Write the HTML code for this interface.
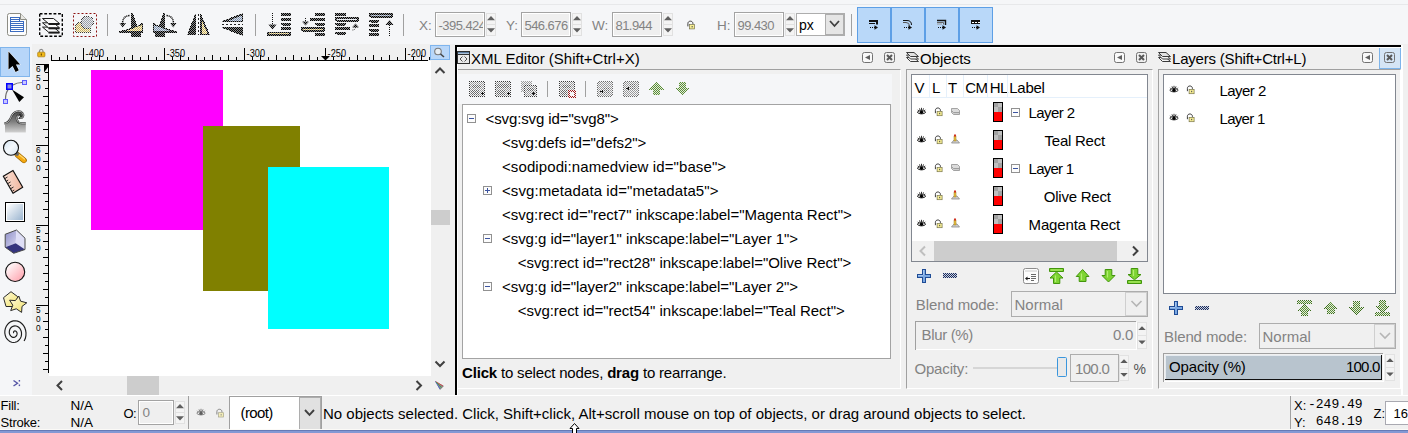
<!DOCTYPE html>
<html>
<head>
<meta charset="utf-8">
<title>Inkscape</title>
<style>
html,body{margin:0;padding:0;}
body{width:1408px;height:433px;position:relative;overflow:hidden;background:#f0f0f0;
 font-family:"Liberation Sans",sans-serif;font-size:15px;color:#000;}
.a{position:absolute;}
.t{position:absolute;white-space:pre;line-height:18px;height:18px;}
.g{color:#838383;}
.box{position:absolute;box-sizing:border-box;}
.inp{position:absolute;box-sizing:border-box;border:1px solid #adadad;background:#f0f0f0;}
.spin{position:absolute;box-sizing:border-box;width:10px;background:#f0f0f0;border:1px solid #e3e3e3;}
svg{position:absolute;overflow:visible;}
</style>
</head>
<body>
<svg width="0" height="0" style="left:0;top:0"><defs>
<pattern id="stk" width="2" height="2" patternUnits="userSpaceOnUse"><rect x="0" y="0" width="1" height="1" fill="#3a3a3a"/><rect x="1" y="1" width="1" height="1" fill="#3a3a3a"/></pattern>
<pattern id="std" width="2" height="2" patternUnits="userSpaceOnUse"><rect width="2" height="2" fill="#202020" fill-opacity="0.5"/><rect x="0" y="0" width="1" height="1" fill="#000"/><rect x="1" y="1" width="1" height="1" fill="#000"/></pattern>
<pattern id="stm" width="2" height="2" patternUnits="userSpaceOnUse"><rect x="0" y="0" width="1" height="1" fill="#6a6a6a"/><rect x="1" y="1" width="1" height="1" fill="#6a6a6a"/></pattern>
<pattern id="stl" width="2" height="2" patternUnits="userSpaceOnUse"><rect x="0" y="0" width="1" height="1" fill="#9a9a9a"/><rect x="1" y="1" width="1" height="1" fill="#9a9a9a"/></pattern>
<pattern id="stg" width="2" height="2" patternUnits="userSpaceOnUse"><rect width="2" height="2" fill="#e3eddb"/><rect x="0" y="0" width="1" height="1" fill="#5b8c38"/><rect x="1" y="1" width="1" height="1" fill="#5b8c38"/></pattern>
<pattern id="str" width="2" height="2" patternUnits="userSpaceOnUse"><rect x="0" y="0" width="1" height="1" fill="#a01818"/><rect x="1" y="1" width="1" height="1" fill="#a01818"/></pattern>
<pattern id="sty" width="2" height="2" patternUnits="userSpaceOnUse"><rect width="2" height="2" fill="#f6f0dc"/><rect x="0" y="0" width="1" height="1" fill="#c8ae58"/><rect x="1" y="1" width="1" height="1" fill="#c8ae58"/></pattern>
<symbol id="bl" overflow="visible"><rect x="0.5" y="0.5" width="10" height="10" rx="2" fill="#f9f9f9" stroke="#727272"/><path d="M3 5.500L8 3V8Z" fill="#606060"/></symbol>
<symbol id="bx" overflow="visible"><rect x="0.5" y="0.5" width="10" height="10" rx="2" fill="none" stroke="#727272"/><path d="M3 3L8 8M8 3L3 8" stroke="#585858" stroke-width="2" fill="none"/></symbol>
<symbol id="lay" overflow="visible"><g stroke="#3a3a3a" stroke-width="1" stroke-linejoin="round" fill="#f4f4f4"><path d="M0.500 6.500H8L12.500 10.500H4.500Z"/><path d="M0.500 4H8L12.500 8H4.500Z"/><path d="M0.500 1.500H8L12.500 5.500H4.500Z" fill="#e2e2e2"/></g></symbol>
<symbol id="eye" overflow="visible"><path d="M0.300 4.700C2 2.600 7 2.600 8.700 4.700C7 6.900 2 6.900 0.300 4.700Z" fill="#fff" stroke="#000" stroke-width="0.900"/><ellipse cx="4.500" cy="4.800" rx="1.700" ry="1.700" fill="#000"/><path d="M0.700 2.300L1.900 3.500M2.500 0.900L3.200 2.800M4.500 0.300V2.600M6.500 0.900L5.800 2.800M8.300 2.300L7.100 3.500" stroke="#000" stroke-width="0.800" fill="none"/></symbol>
<symbol id="lock" overflow="visible"><path d="M0.900 6.200V3.300C0.900 0.200 5.900 0.200 5.900 3.300V4.200" fill="none" stroke="#3c3c3c" stroke-width="1"/><rect x="2.600" y="4.400" width="5" height="4.300" fill="#f7ee94" stroke="#77744a" stroke-width="0.700"/><rect x="4.600" y="5.800" width="1.100" height="1.400" fill="#555"/></symbol>
<symbol id="tlay" overflow="visible"><g fill="#cfcfcf" stroke="#909090" stroke-width="0.800"><path d="M0.500 2.500H6.500L8.500 4.500V6.500H2.500L0.500 4.500Z"/><path d="M0.500 0.500H6.500L8.500 2.500V4.500H2.500L0.500 2.500Z" fill="#dcdcdc"/></g></symbol>
<symbol id="trect" overflow="visible"><path d="M0.500 8.500L3 5.500H6L8.500 8.500Z" fill="#d0d0d0" stroke="#8a8a8a" stroke-width="0.8"/><rect x="3" y="1.500" width="2" height="5" fill="#e8c040" stroke="#a08020" stroke-width="0.500"/><rect x="3" y="0" width="2" height="2" fill="#d03020"/></symbol>
<symbol id="sw" overflow="visible"><g shape-rendering="crispEdges"><rect x="0" y="0" width="10" height="20" fill="#000"/><rect x="1" y="1" width="8" height="9" fill="#bfbfbf"/><rect x="1" y="1" width="4" height="4" fill="#a2a2a2"/><rect x="5" y="5" width="4" height="5" fill="#a2a2a2"/><rect x="1" y="10" width="8" height="9" fill="#ff0000"/></g></symbol>
<symbol id="exm" overflow="visible"><g shape-rendering="crispEdges"><rect x="0.5" y="0.5" width="8" height="8" fill="#fcfcfc" stroke="#919191"/><path d="M2 4.500H7" stroke="#3c54a0" fill="none"/></g></symbol>
<symbol id="plus" overflow="visible"><g shape-rendering="crispEdges"><path d="M5 0H9V5H14V9H9V14H5V9H0V5H5Z" fill="#1f4c96"/><path d="M6 1H8V6H13V8H8V13H6V8H1V6H6Z" fill="#7ba8e2"/><path d="M6 1H7V6H6ZM1 6H6V7H1Z" fill="#a4c4ee"/></g></symbol>
<symbol id="aup" overflow="visible"><path d="M7 0.500L13.500 7H9.500V12.500H4.500V7H0.500Z"/></symbol>
<symbol id="adn" overflow="visible"><path d="M7 12.500L13.500 6H9.500V0.500H4.500V6H0.500Z"/></symbol>
<symbol id="atop" overflow="visible"><path d="M0.500 0.500H15.500V3.500H0.500Z"/><path d="M8 4.500L14.500 10H10.500V15.500H5.500V10H1.500Z"/></symbol>
<symbol id="abot" overflow="visible"><path d="M0.500 12.500H15.500V15.500H0.500Z"/><path d="M8 11.500L14.500 6H10.500V0.500H5.500V6H1.500Z"/></symbol>
<symbol id="spu" overflow="visible"><path d="M0.300 4L4 0.300L7.700 4Z"/></symbol>
<symbol id="spd" overflow="visible"><path d="M0.300 0L4 3.700L7.700 0Z"/></symbol>
<pattern id="stb" width="2" height="2" patternUnits="userSpaceOnUse"><rect width="2" height="2" fill="#d8e0ec"/><rect x="0" y="0" width="1" height="1" fill="#8090a8"/><rect x="1" y="1" width="1" height="1" fill="#8090a8"/></pattern>
<pattern id="stn" width="2" height="2" patternUnits="userSpaceOnUse"><rect width="2" height="2" fill="#c8d0e0"/><rect x="0" y="0" width="1" height="1" fill="#1c2c5c"/><rect x="1" y="1" width="1" height="1" fill="#1c2c5c"/></pattern>
<pattern id="sgy" width="2" height="2" patternUnits="userSpaceOnUse"><rect width="2" height="2" fill="#e6e8ec"/><rect x="0" y="0" width="1" height="1" fill="#9aa0a8"/><rect x="1" y="1" width="1" height="1" fill="#9aa0a8"/></pattern>
<symbol id="arrs" overflow="visible"><path d="M1049.500 268.500H1063.500V271.500H1049.500Z"/><path d="M1056.500 272L1063 278H1059.800V283.500H1053.500V278H1050Z"/><path d="M1082.600 269.500L1089 276.500H1086V281.500H1079.200V276.500H1076.200Z"/><path d="M1108.500 282L1115 275.500H1111.800V269.500H1105.200V275.500H1102Z"/><path d="M1134.500 279.800L1141 274.500H1137.800V268.500H1131.200V274.500H1128Z"/><path d="M1127.500 280.500H1141.500V283.500H1127.500Z"/></symbol>
<linearGradient id="ggr" x1="0" y1="0" x2="1" y2="0"><stop offset="0" stop-color="#6ecb22"/><stop offset="0.45" stop-color="#b6f070"/><stop offset="1" stop-color="#68c41c"/></linearGradient>
<pattern id="stg2" width="2" height="2" patternUnits="userSpaceOnUse"><rect x="0" y="0" width="1" height="1" fill="#3c6c1c"/><rect x="1" y="1" width="1" height="1" fill="#3c6c1c"/></pattern>
</defs></svg>
<!-- ===== top toolbar ===== -->
<div class="a" id="topbar" style="left:0;top:0;width:1408px;height:44px;background:#f5f6f8;"></div>
<div class="a" style="left:0;top:4px;width:1408px;height:1px;background:#e7e8ea;"></div>

<!-- TOPBAR -->
<svg id="tbicons" style="left:0;top:0" width="1000" height="46">
<path d="M107.500 14V36M255.500 14V36M403.500 14V36M851.500 14V36" stroke="#a0a0a0" fill="none" shape-rendering="crispEdges"/>
<path d="M9.500 13.500H20.500L26.500 19.500V33.500Q26.500 35.500 24.500 35.500H9.500Q7.500 35.500 7.500 33.500V15.500Q7.500 13.500 9.500 13.500Z" fill="#fdfdfd" stroke="#8c8c84" stroke-width="1"/><path d="M20.500 13.500V19.500H26.500" fill="#e8e8e4" stroke="#8c8c84" stroke-width="1"/>
<g shape-rendering="crispEdges"><rect x="10" y="17" width="10" height="4" fill="#3c6cc0"/><rect x="10" y="21" width="14" height="11" fill="#3c6cc0"/><path d="M11 18.500H19M11 20.500H19M11 22.500H23M11 24.500H23M11 26.500H23M11 28.500H23M11 30.500H23" stroke="#fff" fill="none"/></g>
<rect x="39.700" y="13.700" width="22.600" height="22.600" fill="none" stroke="#000" stroke-width="1.400" stroke-dasharray="2.800 1.800"/>
<g stroke="#1a1a1a" stroke-width="1" stroke-linejoin="round"><path d="M42.500 27.1H53.500L59.500 32.1H48.500Z" fill="#fafafa"/><path d="M48.500 32.8H59.500" stroke-width="1.600" fill="none"/><path d="M42.500 22.8H53.500L59.500 27.8H48.500Z" fill="#fafafa"/><path d="M48.500 28.5H59.500" stroke-width="1.600" fill="none"/><path d="M42.500 18.5H53.500L59.500 23.5H48.500Z" fill="#fafafa"/><path d="M48.500 24.2H59.500" stroke-width="1.600" fill="none"/></g>
<rect x="73.500" y="13.500" width="23" height="23" fill="none" stroke="#8c1010" stroke-width="1" stroke-dasharray="2 2"/>
<g shape-rendering="crispEdges"><path d="M75 25L78 22H90V33H75Z" fill="url(#sty)"/><path d="M75.500 25L78 22.500H90.500V32.500H75.500Z" fill="none" stroke="url(#stk)"/><circle cx="87.200" cy="22.400" r="6.200" fill="#f5f6f8"/><circle cx="87.200" cy="22.400" r="6.200" fill="url(#sgy)" stroke="url(#stk)"/></g>
<g shape-rendering="crispEdges"><path d="M131 13H133L137 26L143 22.500V32.500H119V31.500L131 28Z" fill="url(#std)"/><path d="M126 31L142 25V31Z" fill="#f5f6f8"/><path d="M126 31L142 25V31Z" fill="url(#sty)"/><path d="M131 33H141V37H131Z" fill="url(#std)"/></g><path d="M129.500 15.500Q122.500 16 122.500 24" fill="none" stroke="#111" stroke-width="1.500" stroke-dasharray="1.200 0.700"/><path d="M119.500 23H126L122.700 27.500Z" fill="url(#std)"/>
<g shape-rendering="crispEdges"><path d="M165 13H163L159 26L153 22.500V32.500H177V31.500L165 28Z" fill="url(#std)"/><path d="M170 31L154 25V31Z" fill="#f5f6f8"/><path d="M170 31L154 25V31Z" fill="url(#stb)"/><path d="M155 33H165V37H155Z" fill="url(#std)"/></g><path d="M166.500 15.500Q173.500 16 173.500 24" fill="none" stroke="#111" stroke-width="1.500" stroke-dasharray="1.200 0.700"/><path d="M170 23H176.500L173.300 27.500Z" fill="url(#std)"/>
<g shape-rendering="crispEdges"><path d="M187 35H196V14H195Z" fill="url(#std)"/><path d="M200 14V35H210L201 14Z" fill="url(#std)"/><path d="M201.500 19.500V33.500H207.500Z" fill="#f5f6f8"/><path d="M201.500 19.500V33.500H207.500Z" fill="url(#sty)"/><path d="M198.500 14V35" stroke="#222" stroke-dasharray="2 2"/></g>
<g shape-rendering="crispEdges"><path d="M222 22V21L243 13V22Z" fill="url(#std)"/><path d="M229 20.500L242 15.500V20.500Z" fill="#f5f6f8"/><path d="M229 20.500L242 15.500V20.500Z" fill="url(#stb)"/><path d="M222 27H243V36L222 28Z" fill="url(#std)"/><path d="M222 24.500H243" stroke="#222" stroke-dasharray="2 2"/></g>
<g shape-rendering="crispEdges" fill="url(#std)"><rect x="281" y="13" width="10" height="3" rx="1.5"/><rect x="281" y="18" width="10" height="3" rx="1.5"/><rect x="281" y="22.5" width="10" height="3" rx="1.5"/><rect x="281" y="27" width="10" height="3" rx="1.5"/><rect x="267" y="31.5" width="24" height="4.5" rx="1.5"/><rect x="315" y="13" width="10" height="3" rx="1.5"/><rect x="310" y="18" width="15" height="3" rx="1.5"/><rect x="315" y="22.5" width="10" height="3" rx="1.5"/><rect x="301" y="27" width="24" height="4.5" rx="1.5"/><rect x="315" y="33" width="10" height="3" rx="1.5"/><rect x="335" y="13" width="11" height="3" rx="1.5"/><rect x="335" y="17" width="24" height="4.5" rx="1.5"/><rect x="335" y="22.5" width="11" height="3" rx="1.5"/><rect x="335" y="27" width="15" height="3" rx="1.5"/><rect x="335" y="31.5" width="11" height="3" rx="1.5"/><rect x="369" y="13" width="24" height="4.5" rx="1.5"/><rect x="369" y="19.5" width="10" height="3" rx="1.5"/><rect x="369" y="24" width="10" height="3" rx="1.5"/><rect x="369" y="28.5" width="10" height="3" rx="1.5"/><rect x="369" y="33" width="10" height="3" rx="1.5"/></g>
<g shape-rendering="crispEdges"><rect x="269" y="33" width="20" height="1" fill="url(#sty)"/><rect x="303" y="29" width="20" height="1" fill="url(#sty)"/><rect x="337" y="19" width="20" height="1" fill="#eef2f8"/><rect x="371" y="15" width="20" height="1" fill="url(#stb)"/></g>
<g><path d="M272.500 13V25" stroke="#111" stroke-width="1" stroke-dasharray="1 1" shape-rendering="crispEdges"/><path d="M268.500 24.500H276.500L272.500 29.500Z" fill="url(#std)"/><path d="M305.500 18V22" stroke="#111" stroke-dasharray="1 1" shape-rendering="crispEdges"/><path d="M302 21.500H309L305.500 25.500Z" fill="url(#std)"/><path d="M355.500 27Q355.500 30 352.500 30" fill="none" stroke="#222" stroke-dasharray="1 1"/><path d="M352 27.500H359L355.500 23.500Z" fill="url(#std)"/><path d="M389.500 25V36" stroke="#111" stroke-dasharray="1 1" shape-rendering="crispEdges"/><path d="M385.500 25H393.500L389.500 20Z" fill="url(#std)"/></g>
<use href="#lock" x="687" y="20.200"/>
<g shape-rendering="crispEdges" fill="#b9d8f9" stroke="#5d9fe6"><rect x="857.500" y="7.500" width="33" height="35"/><rect x="891.500" y="7.500" width="33" height="35"/><rect x="925.500" y="7.500" width="33" height="35"/><rect x="959.500" y="7.500" width="33" height="35"/></g>
<g fill="none" stroke="#111"><path d="M869 21H877V24.500" stroke-width="2"/><path d="M869 23.500H875" stroke-width="1" shape-rendering="crispEdges"/><path d="M903 20.500H907Q911.500 20.500 911.500 25" stroke-width="1"/><path d="M903 22.500H906Q909.500 22.500 909.500 26" stroke-width="1" stroke="#555"/><path d="M937 20.500H945.500V25" stroke-width="1.400"/><path d="M937 22.500H943.500V24.500" stroke-width="1" stroke="#666"/><path d="M937 24H942" stroke="#999" stroke-width="1"/></g><g shape-rendering="crispEdges"><rect x="971" y="20" width="9" height="4" fill="#111"/><path d="M972 22.500H973.500M975 22.500H976.500M978 22.500H979.500" stroke="#fff"/></g><path d="M870 27.500H875" stroke="#111" stroke-dasharray="1 1" shape-rendering="crispEdges"/><path d="M874.5 25.300L878 27.500L874.5 29.700Z" fill="#111"/><path d="M904 27.500H909" stroke="#111" stroke-dasharray="1 1" shape-rendering="crispEdges"/><path d="M908.5 25.300L912 27.500L908.5 29.700Z" fill="#111"/><path d="M938 27.500H943" stroke="#111" stroke-dasharray="1 1" shape-rendering="crispEdges"/><path d="M942.5 25.300L946 27.500L942.5 29.700Z" fill="#111"/><path d="M972 27.500H977" stroke="#111" stroke-dasharray="1 1" shape-rendering="crispEdges"/><path d="M976.5 25.300L980 27.500L976.5 29.700Z" fill="#111"/>
</svg>
<div class="t g" style="left:419px;top:17px;font-size:13.5px;">X:</div>
<div class="box" style="left:435px;top:12px;width:50px;height:25px;border:1px solid #a3a3a3;background:#fff;"></div><div class="a" style="left:437px;top:14px;width:46px;height:21px;background:#efefef;overflow:hidden;"><span class="t g" style="left:1.500px;top:3px;font-size:13px;letter-spacing:-0.55px;">-395.424</span></div>
<svg style="left:486px;top:13px" width="10" height="23"><g shape-rendering="crispEdges"><rect x="0.500" y="0.500" width="9" height="22" fill="#f4f4f4" stroke="#e1e1e1"/><path d="M1 11.500H9" stroke="#e1e1e1"/></g><path d="M1 7.200L5 3L9 7.200Z M1 15.300L5 19.500L9 15.300Z" fill="#606060"/></svg>
<div class="t g" style="left:506px;top:17px;font-size:13.5px;">Y:</div>
<div class="box" style="left:521px;top:12px;width:50px;height:25px;border:1px solid #a3a3a3;background:#fff;"></div><div class="a" style="left:523px;top:14px;width:46px;height:21px;background:#efefef;overflow:hidden;"><span class="t g" style="left:1.500px;top:3px;font-size:13px;letter-spacing:-0.55px;">546.676</span></div>
<svg style="left:572px;top:13px" width="10" height="23"><g shape-rendering="crispEdges"><rect x="0.500" y="0.500" width="9" height="22" fill="#f4f4f4" stroke="#e1e1e1"/><path d="M1 11.500H9" stroke="#e1e1e1"/></g><path d="M1 7.200L5 3L9 7.200Z M1 15.300L5 19.500L9 15.300Z" fill="#606060"/></svg>
<div class="t g" style="left:592px;top:17px;font-size:13.5px;">W:</div>
<div class="box" style="left:612px;top:12px;width:50px;height:25px;border:1px solid #a3a3a3;background:#fff;"></div><div class="a" style="left:614px;top:14px;width:46px;height:21px;background:#efefef;overflow:hidden;"><span class="t g" style="left:1.500px;top:3px;font-size:13px;letter-spacing:-0.55px;">81.944</span></div>
<svg style="left:663px;top:13px" width="10" height="23"><g shape-rendering="crispEdges"><rect x="0.500" y="0.500" width="9" height="22" fill="#f4f4f4" stroke="#e1e1e1"/><path d="M1 11.500H9" stroke="#e1e1e1"/></g><path d="M1 7.200L5 3L9 7.200Z M1 15.300L5 19.500L9 15.300Z" fill="#606060"/></svg>
<div class="t g" style="left:717px;top:17px;font-size:13.5px;">H:</div>
<div class="box" style="left:734px;top:12px;width:50px;height:25px;border:1px solid #a3a3a3;background:#fff;"></div><div class="a" style="left:736px;top:14px;width:46px;height:21px;background:#efefef;overflow:hidden;"><span class="t g" style="left:1.500px;top:3px;font-size:13px;letter-spacing:-0.55px;">99.430</span></div>
<svg style="left:785px;top:13px" width="10" height="23"><g shape-rendering="crispEdges"><rect x="0.500" y="0.500" width="9" height="22" fill="#f4f4f4" stroke="#e1e1e1"/><path d="M1 11.500H9" stroke="#e1e1e1"/></g><path d="M1 7.200L5 3L9 7.200Z M1 15.300L5 19.500L9 15.300Z" fill="#606060"/></svg>
<div class="box" style="left:796px;top:13px;width:49px;height:23px;background:#fff;border:1px solid #adadad;"></div><div class="box" style="left:825px;top:14px;width:19px;height:21px;background:#e5e5e5;border:1px solid #adadad;"></div><div class="t" style="left:799px;top:16px;font-size:14px;">px</div>
<svg style="left:0;top:0" width="1000" height="46"><path d="M830 21L834.500 26L839 21" fill="none" stroke="#404040" stroke-width="1.800"/></svg>
<!-- ===== toolbox ===== -->
<div class="a" id="toolbox" style="left:0;top:44px;width:32px;height:351px;background:#f5f6f8;"></div>
<div class="box" style="left:0;top:47px;width:30px;height:30px;background:#b7d6f9;border:1px solid #80b5ec;"></div>

<!-- ===== canvas area ===== -->
<div class="a" id="canvasarea" style="left:32px;top:44px;width:423px;height:351px;background:#f0f0f0;"></div>
<div class="a" id="canvas" style="left:49px;top:61px;width:382px;height:315px;background:#fff;"></div>
<div class="a" style="left:91px;top:70px;width:132px;height:160px;background:#ff00ff;"></div>
<div class="a" style="left:203px;top:126px;width:97px;height:165px;background:#808000;"></div>
<div class="a" style="left:268px;top:167px;width:121px;height:162px;background:#00ffff;"></div>

<!-- RULERS -->
<svg id="rulers" class="a" style="left:0;top:0" width="460" height="400" shape-rendering="crispEdges">
<path d="M51 60.5H428" stroke="#000" stroke-width="1" fill="none"/>
<path d="M51.5 55V60M59.5 57V60M67.5 55V60M75.5 57V60M83.5 48V60M91.5 57V60M99.5 55V60M107.5 57V60M115.5 55V60M124.5 57V60M132.5 55V60M140.5 57V60M148.5 55V60M156.5 57V60M164.5 48V60M172.5 57V60M180.5 55V60M188.5 57V60M196.5 55V60M204.5 57V60M212.5 55V60M220.5 57V60M228.5 55V60M236.5 57V60M244.5 48V60M252.5 57V60M260.5 55V60M268.5 57V60M276.5 55V60M285.5 57V60M293.5 55V60M301.5 57V60M309.5 55V60M317.5 57V60M325.5 48V60M333.5 57V60M341.5 55V60M349.5 57V60M357.5 55V60M365.5 57V60M373.5 55V60M381.5 57V60M389.5 55V60M397.5 57V60M405.5 48V60M413.5 57V60M421.5 55V60M429.5 57V60" stroke="#000" stroke-width="1" fill="none"/>
<path d="M48.5 64V373" stroke="#000" stroke-width="1" fill="none"/>
<path d="M36 64.5H48M45 72.5H48M43 80.5H48M45 88.5H48M43 96.5H48M45 105.5H48M43 113.5H48M45 121.5H48M43 129.5H48M45 137.5H48M36 145.5H48M45 153.5H48M43 161.5H48M45 169.5H48M43 177.5H48M45 185.5H48M43 193.5H48M45 201.5H48M43 209.5H48M45 217.5H48M36 225.5H48M45 233.5H48M43 241.5H48M45 249.5H48M43 257.5H48M45 265.5H48M43 273.5H48M45 281.5H48M43 289.5H48M45 297.5H48M36 305.5H48M45 313.5H48M43 321.5H48M45 329.5H48M43 337.5H48M45 345.5H48M43 353.5H48M45 361.5H48M43 369.5H48" stroke="#000" stroke-width="1" fill="none"/>
<path d="M321 56H330L325.5 60.5Z" fill="#000" shape-rendering="auto"/>
<path d="M44 64.500H48.500V66.500L44 72.500Z" fill="#000" shape-rendering="auto"/>
<g font-family="Liberation Sans, sans-serif" font-size="10.3" fill="#000" shape-rendering="auto">
<text x="85.6" y="57" textLength="18.4" lengthAdjust="spacingAndGlyphs">-400</text><text x="166.6" y="57" textLength="18.4" lengthAdjust="spacingAndGlyphs">-350</text><text x="246.6" y="57" textLength="18.4" lengthAdjust="spacingAndGlyphs">-300</text><text x="327.6" y="57" textLength="18.4" lengthAdjust="spacingAndGlyphs">-250</text><text x="407.6" y="57" textLength="18.4" lengthAdjust="spacingAndGlyphs">-200</text>
<text x="35.9" y="71.5" font-size="9.8" textLength="4.6" lengthAdjust="spacingAndGlyphs">6</text><text x="35.9" y="80.5" font-size="9.8" textLength="4.6" lengthAdjust="spacingAndGlyphs">5</text><text x="35.9" y="89.5" font-size="9.8" textLength="4.6" lengthAdjust="spacingAndGlyphs">0</text><text x="35.9" y="152.5" font-size="9.8" textLength="4.6" lengthAdjust="spacingAndGlyphs">6</text><text x="35.9" y="161.5" font-size="9.8" textLength="4.6" lengthAdjust="spacingAndGlyphs">0</text><text x="35.9" y="170.5" font-size="9.8" textLength="4.6" lengthAdjust="spacingAndGlyphs">0</text><text x="35.9" y="232.5" font-size="9.8" textLength="4.6" lengthAdjust="spacingAndGlyphs">5</text><text x="35.9" y="241.5" font-size="9.8" textLength="4.6" lengthAdjust="spacingAndGlyphs">5</text><text x="35.9" y="250.5" font-size="9.8" textLength="4.6" lengthAdjust="spacingAndGlyphs">0</text><text x="35.9" y="312.5" font-size="9.8" textLength="4.6" lengthAdjust="spacingAndGlyphs">5</text><text x="35.9" y="321.5" font-size="9.8" textLength="4.6" lengthAdjust="spacingAndGlyphs">0</text><text x="35.9" y="330.5" font-size="9.8" textLength="4.6" lengthAdjust="spacingAndGlyphs">0</text>
</g>
</svg>
<!-- TOOLICONS -->
<svg id="toolicons" style="left:0;top:0" width="50" height="400">
<defs>
<linearGradient id="gw" x1="0" y1="0" x2="0" y2="1"><stop offset="0" stop-color="#4a4a4a"/><stop offset="0.5" stop-color="#808080"/><stop offset="1" stop-color="#d2d2d2"/></linearGradient>
<linearGradient id="gr" x1="0" y1="0" x2="1" y2="1"><stop offset="0" stop-color="#ffffff"/><stop offset="1" stop-color="#9bb5d0"/></linearGradient>
<linearGradient id="ge" x1="0" y1="0" x2="1" y2="1"><stop offset="0.1" stop-color="#ffffff"/><stop offset="1" stop-color="#ff9aa6"/></linearGradient>
<linearGradient id="gm" x1="0" y1="0" x2="1" y2="0"><stop offset="0" stop-color="#fbe3d8"/><stop offset="1" stop-color="#f0b49c"/></linearGradient>
<linearGradient id="gs" x1="0" y1="0" x2="1" y2="1"><stop offset="0" stop-color="#fffbe0"/><stop offset="1" stop-color="#f2e26a"/></linearGradient>
<linearGradient id="gz" x1="0" y1="0" x2="1" y2="1"><stop offset="0" stop-color="#cfe0ee"/><stop offset="0.5" stop-color="#f4f8fc"/><stop offset="1" stop-color="#d4e2ee"/></linearGradient>
<linearGradient id="gbl" x1="0" y1="0" x2="1" y2="1"><stop offset="0" stop-color="#8e8ec6"/><stop offset="1" stop-color="#d6d6f2"/></linearGradient>
</defs>
<path d="M8.500 51.500V69.500L12.600 66L15.600 72L18.800 70.300L15.900 64.600H20.200Z" fill="#000" stroke="#fff" stroke-width="1" stroke-linejoin="round" paint-order="stroke"/>
<path d="M5.500 99Q5.500 93 8 90M13 85Q17 82.500 22 82.500" fill="none" stroke="#707070" stroke-width="1.200"/>
<rect x="6.750" y="83.750" width="5.500" height="5.500" fill="#8a8ae0" stroke="#0000ff" stroke-width="1.500"/><rect x="22.500" y="80.500" width="4" height="4" fill="#c8c8ff" stroke="#5a5aff"/><rect x="3.500" y="99.500" width="4" height="4" fill="#c8c8ff" stroke="#5a5aff"/>
<path d="M12 89.500L24 97.300L19.300 102Z" fill="#000"/>
<path d="M4.300 123.500C9 123.500 10 119 12 115.300C14.500 110.800 20 110 22.500 113C24.300 115.300 23 118.500 20 118C22 116 20.500 114 18.500 115C15 117 17 123.500 21.500 123.500H25.800V132.500H5V125Q4.500 124.500 4.300 123.500Z" fill="url(#gw)"/><path d="M4.300 123.300C9 123.300 10 119 12 115.300C14.500 110.800 20 110 22.500 113C24.300 115.300 23 118.500 20 118C22 116 20.500 114 18.500 115C15 117 17 123.300 21.500 123.300H25.800" fill="none" stroke="#2e2e2e" stroke-width="1.900"/><path d="M4.300 123.300C9 123.300 10 119 12 115.300C14.500 110.800 20 110 22.500 113C24.300 115.300 23 118.500 20 118M18.500 115C15 117 17 123.300 21.500 123.300H25.800" fill="none" stroke="#f4f4f4" stroke-width="0.700"/>
<path d="M17.500 154.800L24 160.300" stroke="#9a6400" stroke-width="5.600" stroke-linecap="round"/><path d="M17.500 154.800L24 160.300" stroke="#f4a810" stroke-width="4.200" stroke-linecap="round"/><path d="M18.600 154.200L24.400 159" stroke="#ffd870" stroke-width="1.200" stroke-linecap="round"/><path d="M15.800 152.800L18.300 155.300" stroke="#6a6a6a" stroke-width="3.400"/><circle cx="11" cy="147.800" r="7.500" fill="url(#gz)" stroke="#111" stroke-width="1.100"/>
<path d="M3.300 176.200L13 170.500L22.700 187.300L13 193.300Z" fill="url(#gm)" stroke="#111" stroke-width="1.200" stroke-linejoin="round"/><path d="M5 178.500L7.500 177M6.500 181L8.200 180M8 183.500L10.500 182M9.500 186L11.200 185M11 188.500L13.500 187M12.500 191L14.200 190" stroke="#111" stroke-width="0.900"/>
<g shape-rendering="crispEdges"><rect x="5.500" y="202.500" width="19" height="19" fill="#fff" stroke="#000"/></g><rect x="7" y="204" width="16" height="16" fill="url(#gr)"/>
<path d="M16.500 230L5.200 234.300V247.200L15.700 243.200Z" fill="url(#gbl)"/><path d="M16.500 230L25 238.200V249.500L15.700 243.200Z" fill="#dedef6"/><path d="M5.200 247.200L15.700 243.200L25 249.500L13.700 253.300Z" fill="#34347e"/><path d="M16.500 230L5.200 234.300V247.200L13.700 253.300L25 249.500V238.200Z" fill="none" stroke="#4a4a4a" stroke-width="1" stroke-linejoin="round"/>
<circle cx="15.100" cy="271.900" r="9.600" fill="url(#ge)" stroke="#111" stroke-width="1.100"/>
<path d="M11 291.700L17.600 296.600L16.500 306.500H6L3.500 297.700Z" fill="url(#gs)" stroke="#2a2a2a" stroke-width="1" stroke-linejoin="round"/><path d="M18.800 296L20.600 301.200L26.800 302.800L22 306.400L21.600 312.400L16.300 308.800L10.700 310.600L12.800 305.200L9.600 300.200L15.400 300.600Z" fill="url(#gs)" stroke="#2a2a2a" stroke-width="1" stroke-linejoin="round"/>
<path d="M13.9 332.9L13.7 332.8L13.6 332.6L13.6 332.3L13.6 332.0L13.7 331.7L13.9 331.4L14.1 331.2L14.5 331.0L14.9 330.9L15.3 331.0L15.7 331.1L16.1 331.4L16.5 331.8L16.8 332.3L17.0 332.9L17.1 333.6L17.0 334.3L16.8 335.0L16.5 335.7L16.0 336.3L15.4 336.8L14.7 337.2L13.9 337.3L13.0 337.3L12.2 337.1L11.4 336.6L10.7 335.9L10.1 335.1L9.6 334.0L9.3 332.9L9.3 331.7L9.5 330.5L9.9 329.3L10.6 328.2L11.4 327.3L12.5 326.5L13.7 326.1L14.9 325.9L16.2 326.0L17.5 326.5L18.7 327.3L19.8 328.4L20.6 329.7L21.2 331.2L21.5 332.9L21.5 334.6L21.2 336.4L20.5 338.0L19.5 339.5L18.3 340.8L16.8 341.7L15.2 342.3L13.4 342.5L11.7 342.2L9.9 341.5L8.4 340.4L7.0 339.0L5.9 337.2L5.2 335.1L4.8 332.9L4.9 330.6L5.4 328.4L6.3 326.2L7.6 324.4L9.2 322.8L11.1 321.6L13.2 320.9L15.4 320.8L17.6 321.1L19.8 322.0L21.7 323.5L23.4 325.3L24.7 327.6L25.6 330.2L26.0 332.9L25.9 335.7L25.3 338.5L24.1 341.1" fill="none" stroke="#1c1c1c" stroke-width="1.150"/>
<path d="M13.500 380.500L17.500 383.200L13.500 386" fill="none" stroke="#5656a6" stroke-width="1.400"/><rect x="18.700" y="380" width="1.400" height="1.600" fill="#5656a6"/><rect x="18.700" y="384.500" width="1.400" height="1.600" fill="#5656a6"/>
<path d="M39.500 52.500V51.300C39.500 48.700 43 48.700 43 51.300V52.500" fill="none" stroke="#8a8a8a" stroke-width="1.200"/><rect x="37.700" y="52.200" width="7.200" height="4.600" rx="0.800" fill="#f0b818" stroke="#a87808" stroke-width="0.700"/><rect x="40.800" y="53.500" width="1" height="2" fill="#5a3c00"/>
</svg>
<!-- SCROLLBARS -->
<div class="box" style="left:430px;top:45px;width:20px;height:15px;background:#b9d7f9;border:1px solid #7fb5ee;"></div>
<div class="a" style="left:431px;top:210px;width:19px;height:15px;background:#cdcdcd;"></div>
<div class="a" style="left:127px;top:376px;width:32px;height:19px;background:#cdcdcd;"></div>
<svg class="a" style="left:0;top:0" width="460" height="400" fill="none" stroke="#404040" stroke-width="2">
<path d="M435.5 73L440 68.5L444.500 73"/>
<circle cx="438" cy="51.500" r="3.300" fill="#e8eef4" stroke="#7a7a7a" stroke-width="1.100"/><path d="M440.500 54L444 57" stroke="#444" stroke-width="1.600"/>
<path d="M435.5 361.5L440 366L444.500 361.5"/>
<path d="M416.5 381L421 385.500L416.500 390"/>
<path d="M62 381L57.500 385.500L62 390"/>
</svg>
<!-- DOCK -->
<div class="a" style="left:455px;top:45px;width:946px;height:2px;background:#000;"></div>
<div class="a" style="left:455px;top:45px;width:2px;height:350px;background:#000;"></div>
<div class="a" style="left:1401px;top:45px;width:2px;height:350px;background:#fff;"></div>
<!-- panel frames (etched) -->
<div class="box" style="left:457px;top:69px;width:444px;height:320px;border-top:1px solid #a0a0a0;border-right:1px solid #fff;border-bottom:1px solid #fff;"></div>
<div class="box" style="left:906px;top:69px;width:247px;height:320px;border-top:1px solid #a0a0a0;border-left:1px solid #a0a0a0;border-right:1px solid #fff;border-bottom:1px solid #fff;"></div>
<div class="box" style="left:1158px;top:69px;width:243px;height:320px;border-top:1px solid #a0a0a0;border-left:1px solid #a0a0a0;border-right:1px solid #fff;border-bottom:1px solid #fff;"></div>
<!-- panel titles -->
<div class="t" style="left:471px;top:50px;">XML Editor (Shift+Ctrl+X)</div>
<div class="t" style="left:920px;top:50px;">Objects</div>
<div class="t" style="left:1172px;top:50px;letter-spacing:-0.2px;">Layers (Shift+Ctrl+L)</div>
<div class="box" style="left:1379px;top:47px;width:22px;height:22px;background:#d5e5f5;border:1px solid #7db4ea;"></div>
<!-- PANELBTNS -->
<div class="a" style="left:457px;top:47px;width:944px;height:1px;background:#fff;"></div>
<div class="a" style="left:457px;top:47px;width:1px;height:348px;background:#fff;"></div>
<svg style="left:0;top:0" width="1408" height="72">
<use href="#bl" x="862" y="52"/><use href="#bx" x="884" y="52"/>
<use href="#bl" x="1114" y="52"/><use href="#bx" x="1136" y="52"/>
<use href="#bl" x="1362" y="52"/><use href="#bx" x="1384" y="52"/>
<use href="#lay" x="906" y="51"/><use href="#lay" x="1158" y="51"/>
<g shape-rendering="crispEdges"><rect x="457.5" y="51.5" width="12" height="12" fill="#e9e9e9" stroke="#303030"/><rect x="458" y="52" width="11" height="1" fill="#5f7fa3"/><rect x="458" y="53" width="11" height="1" fill="#a9bfd6"/><rect x="458" y="54" width="11" height="1" fill="#303030"/></g>
<path d="M462.500 56.500L460 59L462.500 61.500M464.500 56.500L467 59L464.500 61.500" stroke="#505050" stroke-width="1" fill="none"/>
</svg>
<!-- XMLPANEL -->
<div class="a" style="left:458px;top:74px;width:434px;height:30px;background:#f5f6f8;"></div>
<div class="box" style="left:462px;top:104px;width:429px;height:255px;background:#fff;border:1px solid #a3a3a3;"></div>
<div class="t" style="left:485.5px;top:110px;letter-spacing:-0.111px;">&lt;svg:svg id="svg8"&gt;</div>
<svg style="left:467px;top:114px" width="9" height="9" shape-rendering="crispEdges"><rect x="0.5" y="0.5" width="8" height="8" fill="#fcfcfc" stroke="#919191"/><path d="M2 4.5H7" stroke="#3c54a0" fill="none"/></svg>
<div class="t" style="left:502px;top:134px;letter-spacing:-0.049px;">&lt;svg:defs id="defs2"&gt;</div>
<div class="t" style="left:502px;top:158px;letter-spacing:0.099px;">&lt;sodipodi:namedview id="base"&gt;</div>
<div class="t" style="left:502px;top:182px;letter-spacing:0.099px;">&lt;svg:metadata id="metadata5"&gt;</div>
<svg style="left:483px;top:186px" width="9" height="9" shape-rendering="crispEdges"><rect x="0.5" y="0.5" width="8" height="8" fill="#fcfcfc" stroke="#919191"/><path d="M2 4.5H7M4.5 2V7" stroke="#3c54a0" fill="none"/></svg>
<div class="t" style="left:502px;top:206px;letter-spacing:-0.019px;">&lt;svg:rect id="rect7" inkscape:label="Magenta Rect"&gt;</div>
<div class="t" style="left:502px;top:230px;letter-spacing:-0.049px;">&lt;svg:g id="layer1" inkscape:label="Layer 1"&gt;</div>
<svg style="left:483px;top:234px" width="9" height="9" shape-rendering="crispEdges"><rect x="0.5" y="0.5" width="8" height="8" fill="#fcfcfc" stroke="#919191"/><path d="M2 4.5H7" stroke="#3c54a0" fill="none"/></svg>
<div class="t" style="left:517.7px;top:254px;letter-spacing:-0.026px;">&lt;svg:rect id="rect28" inkscape:label="Olive Rect"&gt;</div>
<div class="t" style="left:502px;top:278px;letter-spacing:-0.049px;">&lt;svg:g id="layer2" inkscape:label="Layer 2"&gt;</div>
<svg style="left:483px;top:282px" width="9" height="9" shape-rendering="crispEdges"><rect x="0.5" y="0.5" width="8" height="8" fill="#fcfcfc" stroke="#919191"/><path d="M2 4.5H7" stroke="#3c54a0" fill="none"/></svg>
<div class="t" style="left:517.7px;top:302px;letter-spacing:-0.023px;">&lt;svg:rect id="rect54" inkscape:label="Teal Rect"&gt;</div>
<svg id="xmltb" style="left:0;top:0" width="700" height="110" shape-rendering="crispEdges">
<g fill="url(#stl)" stroke="url(#stk)">
<rect x="469.500" y="81.500" width="15" height="15"/>
<rect x="495.500" y="81.500" width="15" height="15"/>
<rect x="559.500" y="81.500" width="15" height="15"/>
</g>
<rect x="521.500" y="81.500" width="10" height="10" fill="url(#stl)" stroke="url(#stl)"/>
<rect x="524.500" y="85.500" width="12" height="11" fill="#f5f6f8" stroke="none"/>
<rect x="524.500" y="85.500" width="12" height="11" fill="url(#stl)" stroke="url(#stk)"/>
<g fill="url(#stm)"><rect x="472" y="85" width="9" height="3"/><rect x="471" y="90" width="8" height="5"/><rect x="497" y="84" width="12" height="4"/><rect x="497" y="90" width="8" height="5"/><rect x="527" y="88" width="7" height="3"/><rect x="562" y="85" width="9" height="3"/><rect x="561" y="90" width="6" height="5"/></g>
<rect x="568" y="90" width="7" height="7" fill="#f5f6f8"/><rect x="568.500" y="90.500" width="6" height="6" fill="none" stroke="url(#str)" stroke-width="2"/>
<g fill="url(#stl)" stroke="url(#stm)">
<rect x="597.500" y="81.500" width="15" height="15" rx="2.5"/>
<rect x="623.500" y="81.500" width="15" height="15" rx="2.500"/>
</g>
<g fill="url(#stm)"><rect x="604" y="88" width="6" height="1"/><rect x="604" y="90" width="6" height="1"/><rect x="604" y="92" width="6" height="1"/><rect x="630" y="84" width="6" height="1"/><rect x="630" y="86" width="6" height="1"/><rect x="630" y="88" width="6" height="1"/></g>
<g fill="#111"><path d="M482 92h1v1h1v1h-1v1h-1v-1h-1v-1h1z"/><path d="M508 92h1v1h1v1h-1v1h-1v-1h-1v-1h1z"/><path d="M533 92h1v1h1v1h-1v1h-1v-1h-1v-1h1z"/><path d="M600 91h2v-1h1v3h-1v-1h-2z"/><path d="M626 88h2v-1h1v3h-1v-1h-2z"/></g>
<path d="M547.5 81V97M585.500 81V97" stroke="#a0a0a0" fill="none"/>
<path d="M656.5 82L664 89.500H660V95H653V89.500H649Z" fill="url(#stg)"/>
<path d="M682.5 95L690 87.500H686V82H679V87.500H675Z" fill="url(#stg)"/>
</svg>
<div class="t" style="left:462px;top:364px;letter-spacing:-0.18px;"><b>Click</b> to select nodes, <b>drag</b> to rearrange.</div>
<!-- OBJPANEL -->
<div class="box" style="left:911px;top:74px;width:237px;height:188px;background:#fff;border:1px solid #828790;"></div>
<div class="t" style="left:914.4px;top:79px;letter-spacing:0px;">V</div>
<div class="t" style="left:932px;top:79px;letter-spacing:0px;">L</div>
<div class="t" style="left:948px;top:79px;letter-spacing:0px;">T</div>
<div class="t" style="left:965.3px;top:79px;letter-spacing:-0.6px;">CM</div>
<div class="t" style="left:989.8px;top:79px;letter-spacing:-0.7px;">HL</div>
<div class="t" style="left:1009.3px;top:79px;letter-spacing:-0.3px;">Label</div>
<div class="a" style="left:912px;top:97px;width:235px;height:1px;background:#e5f0fb;"></div>
<div class="a" style="left:929px;top:75px;width:1px;height:22px;background:#e5f0fb;"></div>
<div class="a" style="left:946px;top:75px;width:1px;height:22px;background:#e5f0fb;"></div>
<div class="a" style="left:963px;top:75px;width:1px;height:22px;background:#e5f0fb;"></div>
<div class="a" style="left:987px;top:75px;width:1px;height:22px;background:#e5f0fb;"></div>
<div class="a" style="left:1007px;top:75px;width:1px;height:22px;background:#e5f0fb;"></div>
<div class="t" style="left:1028.6px;top:104px;letter-spacing:-0.607px;">Layer 2</div>
<div class="t" style="left:1044.6px;top:132px;letter-spacing:-0.248px;">Teal Rect</div>
<div class="t" style="left:1028.6px;top:160px;letter-spacing:-0.764px;">Layer 1</div>
<div class="t" style="left:1043.8px;top:188px;letter-spacing:-0.229px;">Olive Rect</div>
<div class="t" style="left:1028.6px;top:216px;letter-spacing:-0.166px;">Magenta Rect</div>
<svg style="left:0;top:0" width="1408" height="433">
<use href="#eye" x="917" y="107.5"/><use href="#lock" x="934.500" y="107"/><use href="#tlay" x="951" y="108"/><use href="#sw" x="993" y="102"/><use href="#exm" x="1011" y="108"/>
<use href="#eye" x="917" y="135.5"/><use href="#lock" x="934.500" y="135"/><use href="#trect" x="951" y="134.5"/><use href="#sw" x="993" y="130"/>
<use href="#eye" x="917" y="163.5"/><use href="#lock" x="934.500" y="163"/><use href="#tlay" x="951" y="164"/><use href="#sw" x="993" y="158"/><use href="#exm" x="1011" y="164"/>
<use href="#eye" x="917" y="191.5"/><use href="#lock" x="934.500" y="191"/><use href="#trect" x="951" y="190.5"/><use href="#sw" x="993" y="186"/>
<use href="#eye" x="917" y="219.5"/><use href="#lock" x="934.500" y="219"/><use href="#trect" x="951" y="218.5"/><use href="#sw" x="993" y="214"/>
<rect x="912" y="241" width="235" height="20" fill="#f0f0f0"/><rect x="934" y="241" width="183" height="20" fill="#cdcdcd"/>
<path d="M925 246.500L920.500 251L925 255.500" fill="none" stroke="#bfbfbf" stroke-width="2"/><path d="M1133 246.500L1137.500 251L1133 255.500" fill="none" stroke="#404040" stroke-width="2"/>
<use href="#plus" x="917" y="269"/>
<rect x="943" y="273" width="14" height="5" rx="1" fill="url(#stn)" shape-rendering="crispEdges"/>
<g><rect x="1023.500" y="268.500" width="15" height="15" rx="2" fill="#fdfdfd" stroke="#8c8c8c"/><rect x="1025" y="270" width="12" height="2" fill="#e4e4e4"/><path d="M1031 274.500H1036M1031 276.500H1036M1031 278.500H1036M1031 280.500H1034" stroke="#6a6a6a" fill="none" shape-rendering="crispEdges"/><path d="M1026 278.500H1030" stroke="#1a1a1a" fill="none" shape-rendering="crispEdges"/><path d="M1025 278.500L1027.500 276.500V280.500Z" fill="#1a1a1a"/></g>
<use href="#arrs" fill="#7ed433" stroke="#42950c" stroke-width="1" stroke-linejoin="round"/><g fill="none" stroke="#b8f078" stroke-width="1.200" opacity="0.9"><path d="M1055.500 275.500V282M1081.500 273.500V280M1107.500 271V277.500M1133.500 270V276"/><path d="M1051 270H1062M1129 282H1140"/></g>
<g shape-rendering="crispEdges"><rect x="1011.500" y="291.500" width="136" height="25" fill="#f0f0f0" stroke="#adadad"/><rect x="1125.500" y="292.500" width="21" height="23" fill="#efefef" stroke="#cfcfcf"/></g><path d="M1131.500 301L1136.500 306L1141.500 301" fill="none" stroke="#b5b5b5" stroke-width="1.600"/>
<g shape-rendering="crispEdges"><path d="M915.500 350V321.500H1136" stroke="#a0a0a0" fill="none"/><path d="M916 349.500H1136.500V322" stroke="#fff" fill="none"/><rect x="1137.500" y="322.500" width="9" height="26" fill="#f3f3f3" stroke="#e2e2e2"/><path d="M1138 335.500H1146" stroke="#e2e2e2"/></g><g fill="#5a5a5a"><use href="#spu" x="1138" y="326"/><use href="#spd" x="1138" y="340.500"/></g>
<rect x="973" y="367" width="85" height="2" fill="#d6d6d6"/><rect x="1057.500" y="357.500" width="9" height="19" rx="1" fill="#e9e9e9" stroke="#3a96dd"/>
<g shape-rendering="crispEdges"><rect x="1070.500" y="354.500" width="48" height="27" fill="#f0f0f0" stroke="#adadad"/><rect x="1119.500" y="355.500" width="9" height="25" fill="#f3f3f3" stroke="#e2e2e2"/><path d="M1120 368.500H1128" stroke="#e2e2e2"/></g><g fill="#5a5a5a"><use href="#spu" x="1120" y="359"/><use href="#spd" x="1120" y="373"/></g>
</svg>
<div class="t g" style="left:915.8px;top:296px;letter-spacing:-0.1px;">Blend mode:</div>
<div class="t g" style="left:1014.5px;top:296px;">Normal</div>
<div class="t g" style="left:921.6px;top:326px;letter-spacing:-0.35px;">Blur (%)</div>
<div class="t g" style="left:1113px;top:326px;letter-spacing:-0.3px;">0.0</div>
<div class="t g" style="left:914.4px;top:360px;letter-spacing:-0.15px;">Opacity:</div>
<div class="t g" style="left:1075px;top:360px;letter-spacing:-0.7px;">100.0</div>
<div class="t" style="left:1133.6px;top:360px;color:#555;letter-spacing:-1px;font-size:14px;">%</div>
<!-- LAYPANEL -->
<div class="box" style="left:1163px;top:74px;width:233px;height:220px;background:#fff;border:1px solid #828790;"></div>
<div class="t" style="left:1219.5px;top:82px;letter-spacing:-0.55px;">Layer 2</div>
<div class="t" style="left:1219.5px;top:110px;letter-spacing:-0.7px;">Layer 1</div>
<svg style="left:0;top:0" width="1408" height="433">
<use href="#eye" x="1169.500" y="85.5"/><use href="#lock" x="1186.500" y="85"/>
<use href="#eye" x="1169.500" y="113.5"/><use href="#lock" x="1186.500" y="113"/>
<use href="#plus" x="1169" y="301"/>
<rect x="1195" y="306" width="14" height="4" rx="1" fill="url(#stn)" shape-rendering="crispEdges"/>
<g transform="translate(248 32)" shape-rendering="crispEdges"><use href="#arrs" fill="url(#stg)" stroke="url(#stg2)" stroke-width="1"/></g>
<g shape-rendering="crispEdges"><rect x="1259.500" y="323.500" width="136" height="25" fill="#f0f0f0" stroke="#adadad"/><rect x="1374.500" y="324.500" width="20" height="23" fill="#efefef" stroke="#cfcfcf"/></g><path d="M1380 333L1385 338L1390 333" fill="none" stroke="#b5b5b5" stroke-width="1.600"/>
<g shape-rendering="crispEdges"><path d="M1163.500 382V353.500H1383" stroke="#a0a0a0" fill="none"/><path d="M1164 381.500H1383.500V354" stroke="#fff" fill="none"/><rect x="1165" y="355" width="217" height="25" fill="#b8c4ce"/><path d="M1165 379.500H1381.500V355" stroke="#111" fill="none"/><path d="M1165.500 379V355.500H1381" stroke="#e6ebf0" fill="none"/><rect x="1385.500" y="354.500" width="9" height="26" fill="#f3f3f3" stroke="#e2e2e2"/><path d="M1386 367.500H1394" stroke="#e2e2e2"/></g><g fill="#5a5a5a"><use href="#spu" x="1386" y="358"/><use href="#spd" x="1386" y="372.500"/></g>
</svg>
<div class="t g" style="left:1164px;top:328px;letter-spacing:-0.1px;">Blend mode:</div>
<div class="t g" style="left:1262.500px;top:328px;">Normal</div>
<div class="t" style="left:1169px;top:358px;letter-spacing:-0.15px;">Opacity (%)</div>
<div class="t" style="left:1346px;top:358px;letter-spacing:-0.8px;">100.0</div>
<!-- STATUSBAR -->
<div class="a" style="left:0;top:395px;width:1408px;height:1px;background:#fff;"></div>
<div class="t" style="left:0.500px;top:397px;font-size:13px;letter-spacing:-0.2px;">Fill:</div>
<div class="t" style="left:0.500px;top:414px;font-size:13px;letter-spacing:-0.2px;">Stroke:</div>
<div class="t" style="left:70.500px;top:397px;font-size:13.500px;">N/A</div>
<div class="t" style="left:70.500px;top:414px;font-size:13.500px;">N/A</div>
<div class="t" style="left:123.500px;top:405px;font-size:13px;letter-spacing:-0.5px;">O:</div>
<div class="box" style="left:138px;top:400px;width:36px;height:25px;border:1px solid #a3a3a3;background:#fff;"></div><div class="a" style="left:140px;top:402px;width:32px;height:21px;background:#efefef;"></div>
<div class="t g" style="left:142.500px;top:404px;font-size:13.500px;">0</div>
<div class="a" style="left:188px;top:396px;width:1px;height:34px;background:#a0a0a0;"></div>
<div class="box" style="left:229px;top:396px;width:93px;height:36px;background:#fff;border:1px solid #a0a0a0;"></div>
<div class="box" style="left:299px;top:397px;width:22px;height:34px;background:#e1e1e1;border:1px solid #adadad;"></div>
<div class="t" style="left:240.500px;top:404px;letter-spacing:-0.6px;">(root)</div>
<div class="t" style="left:323px;top:405px;">No objects selected. Click, Shift+click, Alt+scroll mouse on top of objects, or drag around objects to select.</div>
<div class="a" style="left:1290px;top:396px;width:1px;height:34px;background:#a0a0a0;"></div>
<div class="t" style="left:1294px;top:397px;font-size:13px;">X:</div>
<div class="t" style="left:1294px;top:414px;font-size:13px;">Y:</div>
<div class="t" style="left:1308px;top:396px;font-family:'Liberation Mono',monospace;font-size:13px;">-249.49</div>
<div class="t" style="left:1308px;top:413px;font-family:'Liberation Mono',monospace;font-size:13px;"> 648.19</div>
<div class="t" style="left:1373.500px;top:405px;font-size:13px;">Z:</div>
<div class="box" style="left:1385px;top:401px;width:40px;height:24px;background:#fff;border:1px solid #a9a9b1;"></div>
<div class="t" style="left:1393.500px;top:405px;font-size:13px;">16</div>
<svg id="sticons" style="left:0;top:0" width="1408" height="433">
<g shape-rendering="crispEdges"><rect x="175.500" y="401.500" width="9" height="22" fill="#f4f4f4" stroke="#e1e1e1"/><path d="M176 412.500H184" stroke="#e1e1e1"/></g><path d="M176 408.200L180 404L184 408.200Z M176 416.300L180 420.500L184 416.300Z" fill="#606060"/>
<g opacity="0.6"><use href="#eye" x="196.500" y="408.500"/><use href="#lock" x="216" y="408.300"/></g>
<path d="M305 410L309.500 414.800L314 410" fill="none" stroke="#404040" stroke-width="1.900"/>
<g transform="translate(435 381)"><path d="M0 0L9 5L5 9Z" fill="#8a8a8a"/><path d="M0.500 0.500L8 5" stroke="#d04040" stroke-width="0.800"/><path d="M0.500 0.500L5 8" stroke="#4060d0" stroke-width="0.800"/><path d="M1 1L6.500 6.500" stroke="#40a040" stroke-width="0.800"/></g>
</svg>
<div class="a" style="left:0;top:429px;width:1408px;height:1px;background:#fbfaf7;"></div><div class="a" style="left:0;top:430px;width:1408px;height:3px;background:#8398d4;"></div><div class="a" style="left:0;top:430px;width:1408px;height:1px;background:#667ab6;"></div>
<svg style="left:0;top:0" width="1408" height="433"><path d="M574.500 423.500L579 428.500H576.500V434H572.500V428.500H570Z" fill="#fff" stroke="#000" stroke-width="1"/></svg>
</body>
</html>
